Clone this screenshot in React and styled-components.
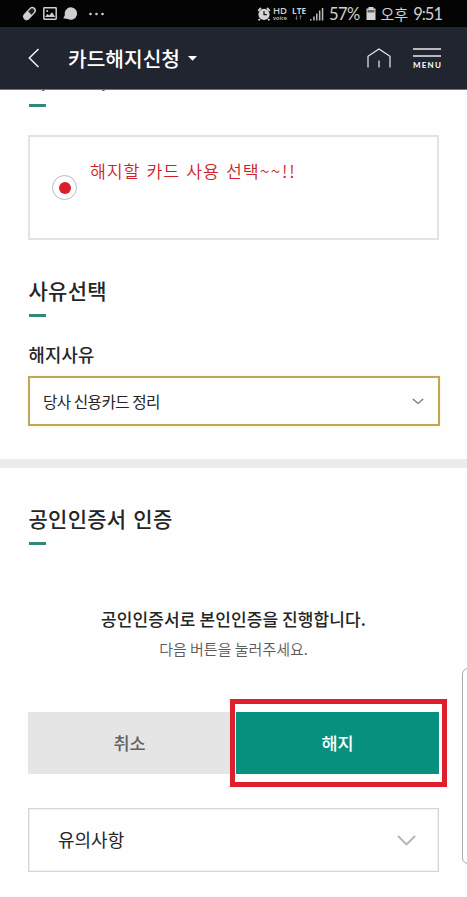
import React from "react";
import styled, { createGlobalStyle } from "styled-components";

const GlobalStyle = createGlobalStyle`
  * { box-sizing: border-box; }
  body { margin: 0; background: #fefefe; overflow: hidden; }
  button { font: inherit; border: 0; padding: 0; background: none; color: inherit; }
`;

const Screen = styled.div`
  position: relative;
  width: 467px;
  height: 897px;
  overflow: hidden;
  background: #fefefe;
  color: #252525;
  font-family: "Noto Sans CJK KR", sans-serif;
  display: flex;
  flex-direction: column;
`;

const StatusBar = styled.div`
  flex: none;
  height: 27px;
  background: #040404;
  color: #cfcfcf;
  display: flex;
  justify-content: space-between;
  padding: 0 25px 0 22px;
`;

const StatusGroup = styled.div`
  display: flex;
  align-items: center;
  height: 27px;
`;

const StatusIcon = styled.svg`
  flex: none;
  display: block;
  margin-left: ${(p) => p.$gap || 0}px;
`;

const StatusText = styled.span`
  font: ${(p) => p.$weight || 400} ${(p) => p.$size}px/1 ${(p) => p.$family || '"Noto Sans CJK KR"'}, sans-serif;
  letter-spacing: ${(p) => p.$spacing || 0}px;
  margin-left: ${(p) => p.$gap || 0}px;
  padding-top: ${(p) => p.$drop || 0}px;
  white-space: nowrap;
`;

const Stack = styled.div`
  display: flex;
  flex-direction: column;
  align-items: center;
  margin-left: ${(p) => p.$gap}px;
`;

const Header = styled.header`
  flex: none;
  height: 63px;
  background: #202530;
  border-bottom: 1px solid #77747b;
  color: #fff;
  display: flex;
  align-items: center;
  padding: 0 26px 0 28px;
`;

const BackIcon = styled.svg`
  flex: none;
`;

const PageTitle = styled.h1`
  margin: 0 0 0 28px;
  font-size: 20.3px;
  font-weight: 500;
  line-height: 30px;
  white-space: nowrap;
`;

const Caret = styled.svg`
  margin-left: 8px;
`;

const HeaderActions = styled.div`
  margin-left: auto;
  display: flex;
  align-items: center;
  gap: 22px;
`;

const MenuButton = styled.button`
  display: flex;
  flex-direction: column;
  align-items: center;
  width: 28px;
  height: 21px;
`;

const MenuLabel = styled.span`
  margin-top: 4px;
  font: 700 8px/8px Lato, sans-serif;
  letter-spacing: 1.2px;
  margin-right: -1px;
`;

const Content = styled.main`
  flex: 1;
  min-height: 0;
  overflow: hidden;
`;

const Section = styled.section`
  padding: 0 28px 0 28px;
`;

const SectionTitle = styled.h2`
  margin: ${(p) => p.$top}px 0 0;
  height: ${(p) => p.$height || 42}px;
  padding-left: 0.5px;
  font-size: 21px;
  line-height: 30px;
  font-weight: 500;
  letter-spacing: 0.25px;
  word-spacing: 2px;
  display: flex;
  flex-direction: column;
  justify-content: space-between;
  white-space: pre;

  &::after {
    content: "";
    width: 17px;
    height: 3px;
    background: #2f8978;
  }
`;

const CardOption = styled.label`
  display: flex;
  height: 105px;
  margin-top: 28px;
  padding: 38px 0 0 22px;
  border: 2px solid #e3e3e4;
`;

const Radio = styled.span`
  flex: none;
  width: 25px;
  height: 25px;
  border: 1px solid #b9bbc6;
  border-radius: 50%;
  display: grid;
  place-items: center;

  &::after {
    content: "";
    width: 12px;
    height: 12px;
    border-radius: 50%;
    background: #dd1f29;
  }
`;

const OptionText = styled.span`
  margin: -17px 0 0 13px;
  height: 28px;
  color: #cf1f2b;
  font-size: 17.3px;
  line-height: 26px;
  font-weight: 350;
  letter-spacing: 0.9px;
  word-spacing: 1.4px;
  white-space: nowrap;
`;

const OptionMarks = styled.span`
  letter-spacing: 1.7px;
`;

const FieldLabel = styled.div`
  margin-top: 24px;
  height: 27px;
  line-height: 26px;
  font-size: 17.7px;
  font-weight: 500;
  letter-spacing: 0.2px;
  padding-left: 0.5px;
`;

const Select = styled.div`
  margin: 8px -1px 0 0;
  height: 50px;
  border: 2px solid #bfa75a;
  outline: 1px solid #fffbe3;
  padding: 0 14px 0 13px;
  display: flex;
  align-items: center;
  justify-content: space-between;
  font-size: 15.7px;
  letter-spacing: -0.65px;
  word-spacing: 0.4px;
`;

const Divider = styled.div`
  height: 9px;
  margin-top: 33px;
  background: #ebebeb;
`;

const Notice = styled.div`
  margin-top: 59px;
  text-align: center;
`;

const NoticeTitle = styled.p`
  margin: 0;
  font-size: 17px;
  line-height: 30px;
  font-weight: 500;
  letter-spacing: 0.1px;
  white-space: nowrap;
`;

const NoticeText = styled.p`
  margin: 1px 0 0;
  font-size: 15px;
  line-height: 28px;
  font-weight: 350;
  color: #5a5a5a;
`;

const Buttons = styled.div`
  display: grid;
  grid-template-columns: 203px 203px;
  gap: 5px;
  height: 62px;
  margin-top: 49px;
`;

const ActionButton = styled.button`
  position: relative;
  padding-bottom: 2px;
  background: ${(p) => (p.$primary ? "#07907e" : "#e5e5e5")};
  color: ${(p) => (p.$primary ? "#fff" : "#626262")};
  font-size: 17.5px;
  font-weight: 500;
`;

const Highlight = styled.span`
  position: absolute;
  inset: -13px -8px -13px -6px;
  border: 5px solid #dd202c;
  pointer-events: none;
`;

const Accordion = styled.div`
  height: 64px;
  margin-top: 34px;
  border: 1px solid #d5d5d5;
  box-shadow: inset 0 0 0 1px #f0f0f0;
  padding: 0 22px 2px 29px;
  display: flex;
  align-items: center;
  justify-content: space-between;
  font-size: 18px;
  font-weight: 400;
`;

const AccordionChevron = styled.svg`
  margin-top: 2px;
`;

const EdgeHandle = styled.div`
  position: absolute;
  left: 462px;
  top: 668px;
  width: 12px;
  height: 196px;
  border: 1px solid #aaa;
  border-radius: 7px;
  background: #fff;
`;

export default function App() {
  return (
    <Screen>
      <GlobalStyle />
      <StatusBar>
        <StatusGroup>
          <StatusIcon width="15" height="15" viewBox="0 0 15 15">
            <g transform="rotate(-47 7.5 7.5)">
              <rect x="-0.2" y="3.9" width="15.4" height="7.2" rx="3.6" fill="#cfcfcf" />
              <path d="M8 5.2h3.4a2.3 2.3 0 0 1 0 4.6H8z" fill="#222" />
            </g>
          </StatusIcon>
          <StatusIcon $gap={6} width="14" height="13" viewBox="0 0 14 13">
            <rect x="0.8" y="0.8" width="12.4" height="11.4" rx="0.6" fill="none" stroke="#cfcfcf" strokeWidth="1.5" />
            <path d="M2 10l2.4-3 1.8 1.6L9 5.2l3.2 4.8z" fill="#cfcfcf" />
            <circle cx="4.2" cy="4.1" r="1" fill="#cfcfcf" />
          </StatusIcon>
          <StatusIcon $gap={6} width="15" height="13" viewBox="0 0 15 13">
            <path d="M8 0.3a6.2 6.2 0 1 1-3.2 11.6L0.3 11.3 1.9 8A6.2 6.2 0 0 1 8 .3z" fill="#cfcfcf" />
          </StatusIcon>
          <StatusIcon $gap={11} width="16" height="4" viewBox="0 0 16 4" fill="#d0d0d0">
            <circle cx="1.5" cy="2" r="1.3" />
            <circle cx="7.5" cy="2" r="1.3" />
            <circle cx="13.5" cy="2" r="1.3" />
          </StatusIcon>
        </StatusGroup>
        <StatusGroup>
          <StatusIcon width="14" height="14" viewBox="0 0 14 14">
            <path d="M1.2 3.8L4 1M12.8 3.8L10 1M2.8 12l-1.2 1.4M11.2 12l1.2 1.4" stroke="#d5d5d5" strokeWidth="1.8" />
            <circle cx="7" cy="7.4" r="5.6" fill="#d5d5d5" />
            <path d="M7 4v3.7h2.8" fill="none" stroke="#111" strokeWidth="1.2" />
          </StatusIcon>
          <Stack $gap={2}>
            <StatusText $size={9.5} $weight={600} $family='"Open Sans"'>HD</StatusText>
            <StatusText $size={5.5} $weight={600} $family='"Open Sans"'>voice</StatusText>
          </Stack>
          <Stack $gap={5}>
            <StatusText $size={8.2} $weight={700} $family='"Open Sans"'>LTE</StatusText>
            <StatusIcon width="8" height="5" viewBox="0 0 8 5" fill="none" stroke="#777" strokeWidth="0.9">
              <path d="M1.5 0.5v4M5.5 0.5v4M0.5 3.5l1 1 1-1M4.5 1.5l1-1 1 1" />
            </StatusIcon>
          </Stack>
          <StatusIcon $gap={4} width="14" height="14" viewBox="0 0 14 14" fill="#bdbdbd">
            <path d="M0 12h1.5v1.5H0zM3.2 9.5h1.5v4H3.2zM6 6.5h1.5v7H6zM8.9 3.5h1.5v10H8.9zM11.8 1h1.5v12.5h-1.5z" />
          </StatusIcon>
          <StatusText $gap={5} $size={16.5} $spacing={-0.6} $drop={2} $family="Lato">57%</StatusText>
          <StatusIcon $gap={6} width="10" height="13" viewBox="0 0 10 13">
            <path d="M2.5 0h5v1.5h2V13h-9V1.5h2z" fill="#d5d5d5" />
            <path d="M1.5 3h7v2.5h-7z" fill="#666" />
          </StatusIcon>
          <StatusText $gap={5} $size={15}>오후</StatusText>
          <StatusText $gap={5} $size={16.5} $spacing={-1} $drop={2} $family="Lato">9:51</StatusText>
        </StatusGroup>
      </StatusBar>

      <Header>
        <BackIcon width="12" height="20" viewBox="0 0 12 20" fill="none" stroke="#f2f2f4" strokeWidth="1.5">
          <path d="M10.5 1L1.3 10l9.2 9" />
        </BackIcon>
        <PageTitle>카드해지신청</PageTitle>
        <Caret width="9" height="5" viewBox="0 0 9 5">
          <path d="M0 0h9L4.5 4.8z" fill="#fff" />
        </Caret>
        <HeaderActions>
          <svg width="24" height="20" viewBox="0 0 24 20" fill="none" stroke="#ececf0" strokeWidth="1.2">
            <path d="M1 19.5V8.2L12 1l11 7.2v11.3M12 12.5v7" />
          </svg>
          <MenuButton>
            <svg width="28" height="9" viewBox="0 0 28 9" stroke="#ececf0" strokeWidth="1.5">
              <path d="M0 1h28M0 8h28" />
            </svg>
            <MenuLabel>MENU</MenuLabel>
          </MenuButton>
        </HeaderActions>
      </Header>

      <Content>
        <Section>
          <SectionTitle $top={-26} $height={43}>카드선택</SectionTitle>
          <CardOption>
            <Radio />
            <OptionText>
              해지할 카드 사용 선택<OptionMarks>~~!!</OptionMarks>
            </OptionText>
          </CardOption>
        </Section>
        <Section>
          <SectionTitle $top={35}>사유선택</SectionTitle>
          <FieldLabel>해지사유</FieldLabel>
          <Select>
            <span>당사 신용카드 정리</span>
            <svg width="12" height="7" viewBox="0 0 12 7" fill="none" stroke="#777" strokeWidth="1.3">
              <path d="M0.8 1L6 5.5 11.2 1" />
            </svg>
          </Select>
        </Section>
        <Divider />
        <Section>
          <SectionTitle $top={35}>공인인증서 인증</SectionTitle>
          <Notice>
            <NoticeTitle>공인인증서로 본인인증을 진행합니다.</NoticeTitle>
            <NoticeText>다음 버튼을 눌러주세요.</NoticeText>
          </Notice>
          <Buttons>
            <ActionButton>취소</ActionButton>
            <ActionButton $primary>
              해지
              <Highlight />
            </ActionButton>
          </Buttons>
          <Accordion>
            <span>유의사항</span>
            <AccordionChevron width="19" height="11" viewBox="0 0 19 11" fill="none" stroke="#b5b5b5" strokeWidth="1.8">
              <path d="M1 1l8.5 8.5L18 1" />
            </AccordionChevron>
          </Accordion>
        </Section>
      </Content>
      <EdgeHandle />
    </Screen>
  );
}
